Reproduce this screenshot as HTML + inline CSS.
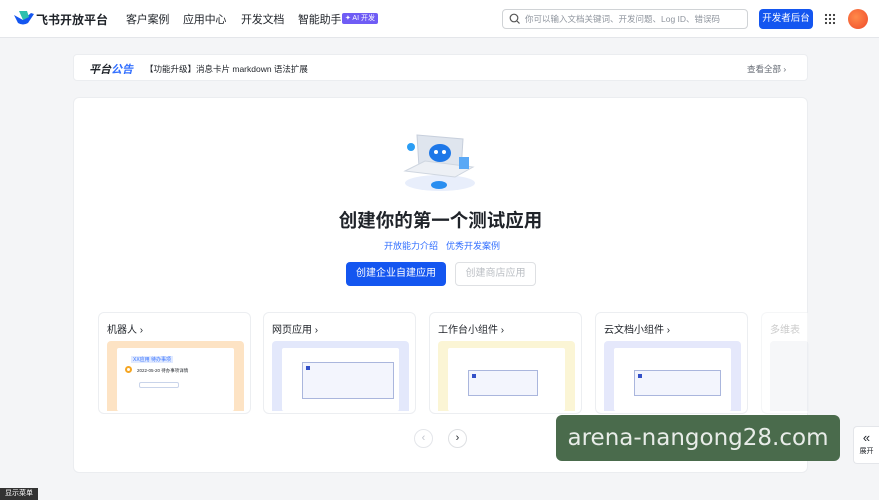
<!DOCTYPE html>
<html><head><meta charset="utf-8"><style>
*{margin:0;padding:0;box-sizing:border-box}
body{width:879px;height:500px;overflow:hidden;background:#f4f5f7;font-family:"Liberation Sans","Noto Sans CJK SC",sans-serif;position:relative;color:#1f2329}
.abs{position:absolute}
.hdr{left:0;top:0;width:879px;height:38px;background:#fff;border-bottom:1px solid #e4e6ea}
.nav{top:11px;font-size:11px;color:#1f2329;letter-spacing:-0.2px}
.ann{left:73px;top:54px;width:735px;height:27px;background:#fff;border-radius:4px;border:1px solid #ebedf0}
.main{left:73px;top:97px;width:735px;height:376px;background:#fff;border-radius:6px;border:1px solid #ebedf0}
.card{top:312px;width:153px;height:102px;background:#fff;border:1px solid #eceef1;border-radius:6px}
.card .t{position:absolute;left:8px;top:8px;font-size:10px;color:#1f2329}
.card .p{position:absolute;left:8px;top:28px;width:137px;height:70px;border-radius:4px 4px 0 0}
.card .in{position:absolute;left:10px;top:7px;right:10px;bottom:0;background:#fff;border-radius:2px}
</style></head><body>
<div class="abs hdr"></div>
<svg class="abs" style="left:14px;top:11px" width="20" height="15" viewBox="0 0 20 15"><path d="M0 4 L9 9 L17 2 L20 3 L14 12 Q9 15 4 12 Z" fill="#1456f0"/><path d="M5 0 L13 0 L15 6 L9 9 Z" fill="#2dbfae"/></svg>
<div class="abs" style="left:36px;top:11px;font-size:12px;font-weight:bold">飞书开放平台</div>
<div class="abs nav" style="left:126px">客户案例</div>
<div class="abs nav" style="left:183px">应用中心</div>
<div class="abs nav" style="left:241px">开发文档</div>
<div class="abs nav" style="left:298px">智能助手</div>
<div class="abs" style="left:342px;top:13px;width:36px;height:11px;background:#6f5cf5;border-radius:2px;color:#fff;font-size:7px;line-height:11px;text-align:center">✦ AI 开发</div>
<div class="abs" style="left:502px;top:9px;width:246px;height:20px;border:1px solid #d0d3d6;border-radius:4px;background:#fff"></div>
<svg class="abs" style="left:509px;top:13px" width="11" height="11"><circle cx="5" cy="5" r="3.8" fill="none" stroke="#555" stroke-width="1.2"/><path d="M8 8 L10.5 10.5" stroke="#555" stroke-width="1.2"/></svg>
<div class="abs" style="left:525px;top:13px;font-size:8.5px;color:#8f959e">你可以输入文档关键词、开发问题、Log ID、错误码</div>
<div class="abs" style="left:759px;top:9px;width:54px;height:20px;background:#1456f0;border-radius:4px;color:#fff;font-size:9.5px;line-height:20px;text-align:center">开发者后台</div>
<svg class="abs" style="left:824px;top:13px" width="12" height="12"><g fill="#333"><circle cx="2" cy="2" r="1.1"/><circle cx="6" cy="2" r="1.1"/><circle cx="10" cy="2" r="1.1"/><circle cx="2" cy="6" r="1.1"/><circle cx="6" cy="6" r="1.1"/><circle cx="10" cy="6" r="1.1"/><circle cx="2" cy="10" r="1.1"/><circle cx="6" cy="10" r="1.1"/><circle cx="10" cy="10" r="1.1"/></g></svg>
<div class="abs" style="left:848px;top:9px;width:20px;height:20px;border-radius:50%;background:radial-gradient(circle at 40% 40%,#ff8a4a,#ef4a2a)"></div>

<div class="abs ann"></div>
<div class="abs" style="left:89px;top:61px;font-size:11px;font-weight:bold;font-style:italic">平台<span style="color:#3370ff">公告</span></div>
<div class="abs" style="left:145px;top:63px;font-size:8.5px;color:#1f2329">【功能升级】消息卡片 markdown 语法扩展</div>
<div class="abs" style="left:747px;top:63px;font-size:8.5px;color:#646a73">查看全部 ›</div>

<div class="abs main"></div>
<svg class="abs" style="left:395px;top:123px" width="90" height="70" viewBox="0 0 90 70"><ellipse cx="45" cy="60" rx="35" ry="8" fill="#e8eefb"/><path d="M22 12 L68 16 L66 48 L24 44 Z" fill="#dfe5ee" stroke="#c7cfdc"/><path d="M10 48 L60 54 L78 44 L30 38 Z" fill="#edf0f5" stroke="#cfd6e0"/><ellipse cx="45" cy="30" rx="11" ry="9" fill="#1d77e8"/><circle cx="41" cy="29" r="2" fill="#fff"/><circle cx="49" cy="29" r="2" fill="#fff"/><circle cx="16" cy="24" r="4" fill="#2a9df4"/><rect x="64" y="34" width="10" height="12" fill="#5aa8f5"/><ellipse cx="44" cy="62" rx="8" ry="4" fill="#2a8ef0"/></svg>
<div class="abs" style="left:0;width:879px;top:207px;text-align:center;font-size:18.5px;font-weight:bold;color:#1f2329;padding-left:2px">创建你的第一个测试应用</div>
<div class="abs" style="left:384px;top:239px;font-size:9px;color:#3370ff">开放能力介绍</div>
<div class="abs" style="left:446px;top:239px;font-size:9px;color:#3370ff">优秀开发案例</div>
<div class="abs" style="left:346px;top:262px;width:100px;height:24px;background:#1456f0;border-radius:4px;color:#fff;font-size:10px;line-height:24px;text-align:center">创建企业自建应用</div>
<div class="abs" style="left:455px;top:262px;width:81px;height:24px;border:1px solid #dee0e3;border-radius:4px;color:#bbbfc4;font-size:10px;line-height:22px;text-align:center">创建商店应用</div>

<div class="abs card" style="left:98px"><div class="t">机器人 ›</div><div class="p" style="background:#fde3c4"><div class="in"><div style="position:absolute;left:14px;top:8px;font-size:5px;color:#3370ff;background:#e1eaff;padding:0 2px">XX应用 待办事项</div><div style="position:absolute;left:8px;top:18px;width:7px;height:7px;border-radius:50%;border:2px solid #f5a623"></div><div style="position:absolute;left:20px;top:20px;font-size:4.5px">2022-05-20 待办事项详情</div><div style="position:absolute;left:22px;top:34px;width:40px;height:6px;border:1px solid #c9d4ea;border-radius:2px"></div></div></div></div>
<div class="abs card" style="left:263px"><div class="t">网页应用 ›</div><div class="p" style="background:#e3e8fb"><div class="in"><div style="position:absolute;left:20px;top:14px;right:5px;height:37px;border:1px solid #aab6dd;background:#f3f5fd"></div><div style="position:absolute;left:24px;top:18px;width:4px;height:4px;background:#3350c8"></div></div></div></div>
<div class="abs card" style="left:429px"><div class="t">工作台小组件 ›</div><div class="p" style="background:#fbf5d5"><div class="in"><div style="position:absolute;left:20px;top:22px;width:70px;height:26px;border:1px solid #aab6dd;background:#f3f5fd"></div><div style="position:absolute;left:24px;top:26px;width:4px;height:4px;background:#3350c8"></div></div></div></div>
<div class="abs card" style="left:595px"><div class="t">云文档小组件 ›</div><div class="p" style="background:#e5e8fb"><div class="in"><div style="position:absolute;left:20px;top:22px;right:10px;height:26px;border:1px solid #aab6dd;background:#f3f5fd"></div><div style="position:absolute;left:24px;top:26px;width:4px;height:4px;background:#3350c8"></div></div></div></div>
<div class="abs card" style="left:761px;width:47px;opacity:.5;border-right:none;border-radius:6px 0 0 6px"><div class="t" style="color:#999">多维表</div><div class="p" style="background:#eef0f5;width:39px"></div></div>

<div class="abs" style="left:414px;top:429px;width:19px;height:19px;border-radius:50%;border:1px solid #e4e6ea;background:#fff;color:#c0c4cc;font-size:11px;line-height:17px;text-align:center">‹</div>
<div class="abs" style="left:448px;top:429px;width:19px;height:19px;border-radius:50%;border:1px solid #dee0e3;background:#fff;color:#1f2329;font-size:11px;line-height:17px;text-align:center">›</div>

<div class="abs" style="left:556px;top:415px;width:284px;height:46px;background:#4a6b4c;border-radius:6px;color:#e8ece8;font-family:'DejaVu Sans',sans-serif;font-size:23px;line-height:46px;text-align:center">arena-nangong28.com</div>
<div class="abs" style="left:853px;top:426px;width:26px;height:38px;background:#fff;border:1px solid #e4e6ea;border-right:none;border-radius:4px 0 0 4px;text-align:center"><div style="font-size:13px;line-height:16px;margin-top:3px">«</div><div style="font-size:7px">展开</div></div>
<div class="abs" style="left:0;top:488px;width:38px;height:12px;background:#333;color:#fff;font-size:7px;line-height:12px;text-align:center">显示菜单</div>
</body></html>
